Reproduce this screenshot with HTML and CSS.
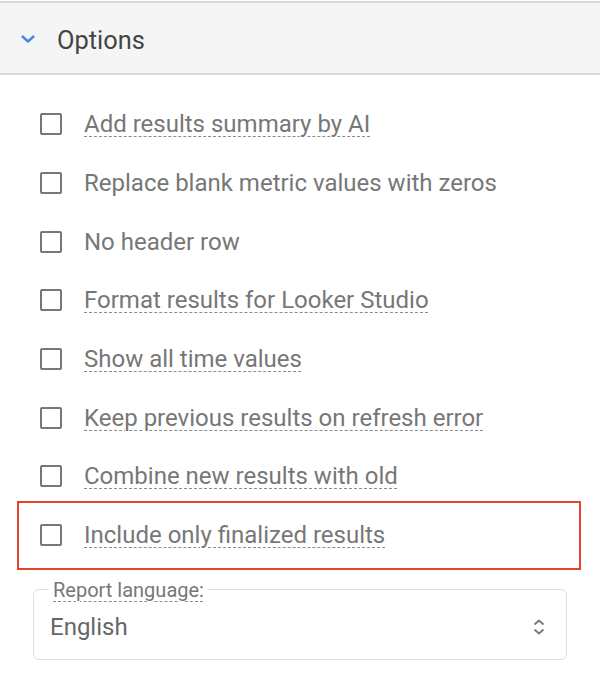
FILE: index.html
```html
<!DOCTYPE html>
<html>
<head>
<meta charset="utf-8">
<link rel="stylesheet" href="styles.css">
</head>
<body>
<div class="panel">
  <div class="header">
    <svg class="chev" width="14" height="8" viewBox="0 0 14 8"><path d="M1.5 1.5 L7 6.5 L12.5 1.5" fill="none" stroke="#4a86e8" stroke-width="2.4" stroke-linecap="round" stroke-linejoin="round"/></svg>
    <span class="title">Options</span>
  </div>
  <div class="list">
    <label class="row"><span class="box"></span><span class="lbl dashed">Add results summary by AI</span></label>
    <label class="row"><span class="box"></span><span class="lbl">Replace blank metric values with zeros</span></label>
    <label class="row"><span class="box"></span><span class="lbl">No header row</span></label>
    <label class="row"><span class="box"></span><span class="lbl dashed">Format results for Looker Studio</span></label>
    <label class="row"><span class="box"></span><span class="lbl dashed">Show all time values</span></label>
    <label class="row"><span class="box"></span><span class="lbl dashed">Keep previous results on refresh error</span></label>
    <label class="row"><span class="box"></span><span class="lbl dashed">Combine new results with old</span></label>
    <label class="row highlight"><span class="box"></span><span class="lbl dashed">Include only finalized results</span></label>
  </div>
  <fieldset class="field">
    <legend class="legend"><span class="dashed">Report language:</span></legend>
    <div class="select">
      <span class="value">English</span>
      <svg class="updown" width="12" height="18" viewBox="0 0 12 18"><path d="M2 6 L6 2.5 L10 6" fill="none" stroke="#777" stroke-width="1.8" stroke-linecap="round" stroke-linejoin="round"/><path d="M2 12 L6 15.5 L10 12" fill="none" stroke="#777" stroke-width="1.8" stroke-linecap="round" stroke-linejoin="round"/></svg>
    </div>
  </fieldset>
</div>
</body>
</html>
```
FILE: styles.css
```css
html, body {
  margin: 0;
  padding: 0;
  background: #fff;
}
body {
  font-family: Roboto, "Liberation Sans", sans-serif;
  color: #757575;
}
.panel {
  padding-top: 1px;
}
.header {
  display: flex;
  align-items: center;
  height: 70px;
  background: #f5f5f5;
  border-top: 2px solid #dadada;
  border-bottom: 2px solid #dadada;
  padding-left: 21px;
}
.chev {
  display: block;
  margin-right: 22px;
  margin-top: 2px;
}
.title {
  font-size: 25.4px;
  color: #444;
  margin-top: 3px;
}
.list {
  padding-top: 20px;
  padding-left: 40px;
}
.row {
  position: relative;
  display: flex;
  align-items: center;
  height: 58.7px;
}
.box {
  width: 18px;
  height: 18px;
  border: 2.5px solid #777;
  border-radius: 2px;
  margin-right: 22px;
  flex: none;
}
.lbl {
  font-size: 24px;
  color: #777;
  line-height: 28px;
}
.dashed {
  text-decoration: underline dashed #8c8c8c;
  text-decoration-thickness: 1px;
  text-underline-offset: 4px;
}
.highlight::after {
  content: "";
  position: absolute;
  left: -23px;
  right: 19px;
  top: -5px;
  bottom: -5px;
  border: 2.5px solid #e5432b;
}
.field {
  margin: 14px 33px 0 33px;
  padding: 0 17px 6px 16px;
  border: 1.5px solid #dedede;
  border-radius: 6px;
  min-width: 0;
}
.legend {
  padding: 0 4px;
  margin-left: -1px;
  font-size: 20px;
  color: #777;
  line-height: 22px;
}
.select {
  display: flex;
  align-items: center;
  justify-content: space-between;
  height: 52px;
}
.value {
  font-size: 24px;
  color: #666;
}
.updown {
  display: block;
  margin-right: 4px;
}
```
